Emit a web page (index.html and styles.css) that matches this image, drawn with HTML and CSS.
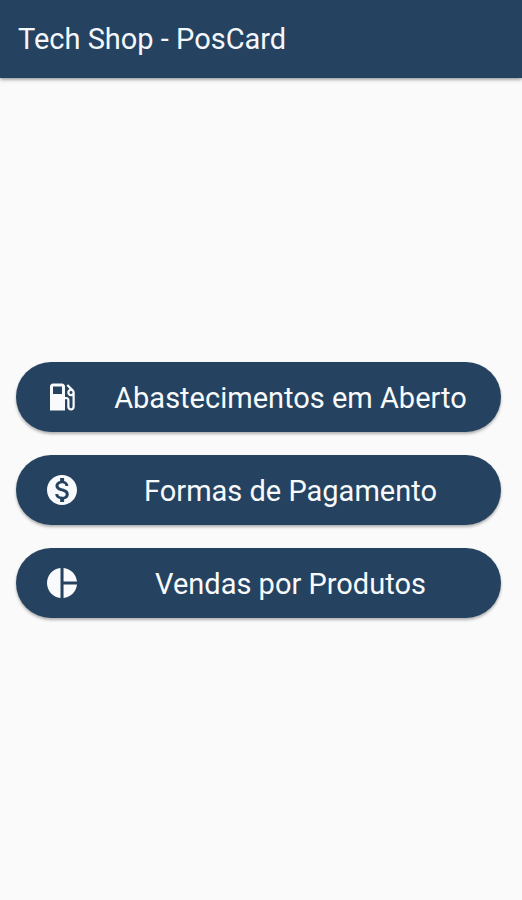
FILE: index.html
```html
<!DOCTYPE html>
<html lang="pt-BR">
<head>
<meta charset="utf-8">
<meta name="viewport" content="width=device-width, initial-scale=1">
<title>Tech Shop - PosCard</title>
<link rel="stylesheet" href="styles.css">
</head>
<body>
<header class="app-bar"><h1 class="app-title">Tech Shop - PosCard</h1></header>
<main class="menu">
<button class="menu-button" type="button">
<svg class="icon" viewBox="0 0 24 24" aria-hidden="true"><path d="M19.77 7.23l.01-.01-3.72-3.72L15 4.56l2.11 2.11c-.94.36-1.61 1.26-1.61 2.33 0 1.38 1.12 2.5 2.5 2.5.36 0 .69-.08 1-.21v7.21c0 .55-.45 1-1 1s-1-.45-1-1V14c0-1.1-.9-2-2-2h-1V5c0-1.1-.9-2-2-2H6c-1.1 0-2 .9-2 2v16h10v-7.500h1.500v5c0 1.380 1.120 2.500 2.500 2.500s2.500-1.120 2.500-2.500V9c0-.69-.28-1.320-.73-1.770zM12 10H6V5h6v5zm6 0c-.55 0-1-.45-1-1s.45-1 1-1 1 .45 1 1-.45 1-1 1z"/></svg>
<span class="label">Abastecimentos em Aberto</span>
</button>
<button class="menu-button" type="button">
<svg class="icon" viewBox="0 0 24 24" aria-hidden="true"><path d="M12 2C6.480 2 2 6.480 2 12s4.480 10 10 10 10-4.480 10-10S17.520 2 12 2zm1.410 16.090V20h-2.670v-1.930c-1.710-.36-3.160-1.460-3.270-3.400h1.960c.1 1.050.82 1.870 2.650 1.870 1.960 0 2.400-.98 2.400-1.590 0-.83-.44-1.610-2.670-2.140-2.480-.6-4.180-1.620-4.180-3.670 0-1.720 1.390-2.840 3.110-3.210V4h2.670v1.950c1.860.45 2.790 1.860 2.850 3.390H14.300c-.05-1.110-.64-1.870-2.220-1.870-1.500 0-2.400.68-2.400 1.640 0 .84.65 1.390 2.670 1.910s4.180 1.390 4.180 3.910c-.01 1.830-1.380 2.830-3.120 3.160z"/></svg>
<span class="label">Formas de Pagamento</span>
</button>
<button class="menu-button" type="button">
<svg class="icon" viewBox="0 0 24 24" aria-hidden="true"><path d="M11 2v20c-5.070-.5-9-4.790-9-10s3.930-9.500 9-10zm2.030 0v8.990H22c-.47-4.740-4.240-8.520-8.970-8.990zm0 11.010V22c4.740-.47 8.500-4.250 8.970-8.990h-8.970z"/></svg>
<span class="label">Vendas por Produtos</span>
</button>
</main>
</body>
</html>
```
FILE: styles.css
```css
* {
  box-sizing: border-box;
}

body {
  display: flex;
  flex-direction: column;
  min-height: 100vh;
  margin: 0;
  background: #fafafa;
  font-family: Roboto, "Liberation Sans", sans-serif;
}

.app-bar {
  display: flex;
  align-items: center;
  height: 78px;
  padding: 0 18px;
  background: #254360;
  color: #f4f8fc;
  box-shadow: 0 1px 4px rgba(0, 0, 0, 0.5);
}

.app-title {
  margin: 0;
  font-size: 29px;
  font-weight: 400;
  line-height: 36px;
}

.menu {
  display: flex;
  flex: 1;
  flex-direction: column;
  justify-content: center;
  gap: 23px;
  padding: 2px 21px 0 16px;
}

.menu-button {
  display: flex;
  align-items: center;
  width: 100%;
  height: 70px;
  padding: 0 32px 0 28px;
  border: 0;
  border-radius: 35px;
  background: #254360;
  color: #f8fafc;
  font: inherit;
  font-size: 29px;
  line-height: 36px;
  box-shadow: 0 2px 3px rgba(0, 0, 0, 0.3);
}

.icon {
  flex: none;
  width: 36px;
  height: 36px;
  fill: currentColor;
}

.label {
  flex: 1;
  margin-left: 32px;
  padding-top: 2px;
  text-align: center;
  white-space: nowrap;
}
```
